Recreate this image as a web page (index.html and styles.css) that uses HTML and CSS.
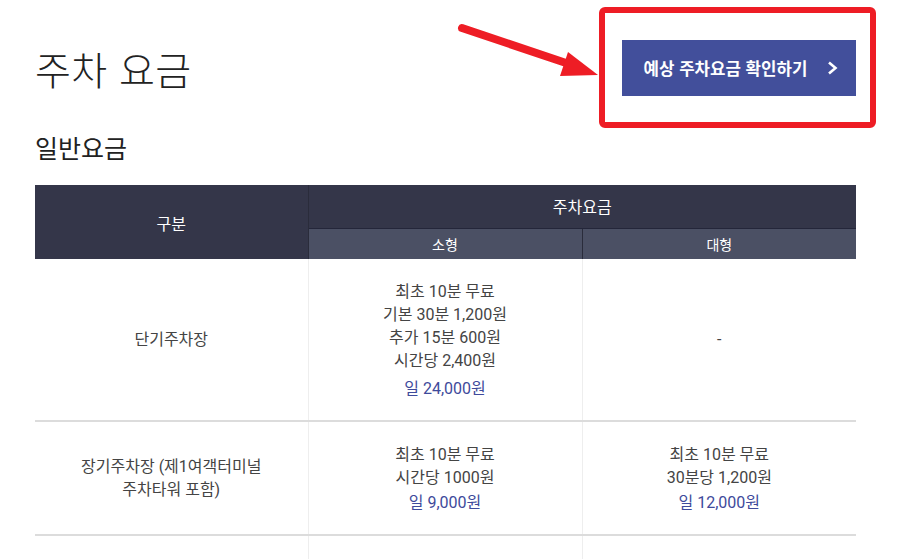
FILE: index.html
```html
<!DOCTYPE html>
<html lang="ko">
<head>
<meta charset="utf-8">
<link rel="stylesheet" href="styles.css">
</head>
<body>
<div class="page">
  <div class="title-row">
    <h1 class="title">주차 요금</h1>
    <a class="btn-estimate" href="#">예상 주차요금 확인하기
      <svg class="chev" width="11" height="14" viewBox="0 0 11 14"><path d="M2 1.5 L8.5 7 L2 12.5" fill="none" stroke="#fff" stroke-width="2.6"/></svg>
    </a>
  </div>
  <h2 class="subtitle">일반요금</h2>
  <table class="fee-table">
    <colgroup><col class="c1"><col class="c2"><col class="c3"></colgroup>
    <thead>
      <tr class="h1row">
        <th rowspan="2" class="th-main">구분</th>
        <th colspan="2" class="th-main th-fee">주차요금</th>
      </tr>
      <tr class="h2row">
        <th class="th-sub">소형</th>
        <th class="th-sub">대형</th>
      </tr>
    </thead>
    <tbody>
      <tr class="r1">
        <td>단기주차장</td>
        <td>
          <p>최초 10분 무료<br>기본 30분 1,200원<br>추가 15분 600원<br>시간당 2,400원</p>
          <p class="day">일 24,000원</p>
        </td>
        <td>-</td>
      </tr>
      <tr class="r2">
        <td>장기주차장 (제1여객터미널<br>주차타워 포함)</td>
        <td>
          <p>최초 10분 무료<br>시간당 1000원</p>
          <p class="day">일 9,000원</p>
        </td>
        <td>
          <p>최초 10분 무료<br>30분당 1,200원</p>
          <p class="day">일 12,000원</p>
        </td>
      </tr>
      <tr class="r3">
        <td>&nbsp;</td><td>&nbsp;</td><td>&nbsp;</td>
      </tr>
    </tbody>
  </table>
</div>
<svg class="annot" width="897" height="559" viewBox="0 0 897 559">
  <rect x="602" y="10" width="271" height="115" rx="3" fill="none" stroke="#ee1d25" stroke-width="6"/>
  <line x1="462" y1="28" x2="572" y2="65" stroke="#ee1d25" stroke-width="8" stroke-linecap="round"/>
  <polygon points="568,52 598,75 560,76" fill="#ee1d25"/>
</svg>
</body>
</html>
```

FILE: styles.css
```css
* { box-sizing: border-box; }
html, body { margin: 0; padding: 0; background: #fff; }
body {
  font-family: Roboto, "Noto Sans CJK KR", sans-serif;
  color: #333;
  width: 897px;
  height: 559px;
  overflow: hidden;
  position: relative;
}
.page {
  padding: 40px 41px 0 35px;
}
.title-row {
  display: flex;
  justify-content: space-between;
  align-items: center;
  height: 56px;
}
.title {
  margin: 0;
  font-family: "Noto Sans CJK KR", sans-serif;
  font-weight: 300;
  font-size: 39px;
  line-height: 56px;
  color: #222;
  letter-spacing: 0.4px;
}
.btn-estimate {
  display: flex;
  align-items: center;
  justify-content: center;
  gap: 20px;
  width: 234px;
  height: 56px;
  background: #424f9b;
  color: #fff;
  text-decoration: none;
  font-family: "Noto Sans CJK KR", sans-serif;
  font-weight: 700;
  font-size: 16.8px;
  padding-left: 4px;
}
.chev { display: block; }
.subtitle {
  margin: 33px 0 0;
  font-family: "Noto Sans CJK KR", sans-serif;
  font-weight: 400;
  font-size: 25px;
  line-height: 36px;
  color: #222;
}
.fee-table {
  margin-top: 20px;
  width: 821px;
  border-collapse: collapse;
  table-layout: fixed;
  text-align: center;
}
.c1 { width: 273px; }
.c2 { width: 274px; }
.c3 { width: 274px; }
.th-main {
  background: #343649;
  color: #fff;
  font-weight: 400;
  font-size: 16px;
  font-family: "Noto Sans CJK KR", sans-serif;
  padding: 0;
}
.h1row { height: 43px; }
.h2row { height: 31px; }
.th-main[rowspan] { border-right: 1px solid #2a2c3b; padding-top: 2px; }
.th-fee { border-bottom: 1px solid #24263a; }
.th-sub {
  background: #4b5064;
  color: #fff;
  font-weight: 400;
  font-size: 14px;
  font-family: "Noto Sans CJK KR", sans-serif;
  padding: 0;
}
.th-sub + .th-sub { border-left: 1px solid #2a2c3b; }
tbody td {
  font-size: 16px;
  font-weight: 400;
  line-height: 23px;
  color: #444;
  border-bottom: 2px solid #dcdcdc;
  border-left: 1px solid #eee;
  padding: 0;
  vertical-align: middle;
}
tbody td:first-child { border-left: none; }
.r1 { height: 162px; }
.r2 { height: 114px; }
.r3 { height: 40px; }
.r3 td { border-bottom: none; }
td p { margin: 0; }
td p.day { color: #3e4a9b; margin-top: 5px; }
.r2 td p.day { margin-top: 2px; }
.annot {
  position: absolute;
  left: 0;
  top: 0;
  pointer-events: none;
}
```
